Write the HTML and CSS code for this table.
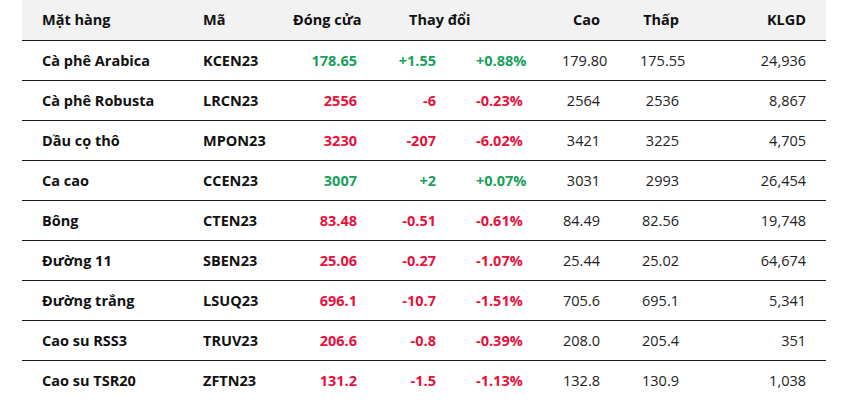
FILE: index.html
```html
<!DOCTYPE html>
<html lang="vi">
<head>
<meta charset="utf-8">
<title>Hàng hóa</title>
<link rel="stylesheet" href="styles.css">
</head>
<body>
<div class="wrap">
<table class="quotes">
  <colgroup>
    <col class="c1"><col class="c2"><col class="c3"><col class="c4"><col class="c5"><col class="c6"><col class="c7"><col class="c8">
  </colgroup>
  <thead>
    <tr>
      <th class="l">Mặt hàng</th>
      <th class="l">Mã</th>
      <th class="r">Đóng cửa</th>
      <th class="chg" colspan="2">Thay đổi</th>
      <th class="r">Cao</th>
      <th class="r">Thấp</th>
      <th class="r">KLGD</th>
    </tr>
  </thead>
  <tbody>
    <tr><td class="name">Cà phê Arabica</td><td class="code">KCEN23</td><td class="num b up">178.65</td><td class="num b up">+1.55</td><td class="num b up">+0.88%</td><td class="num">179.80</td><td class="num">175.55</td><td class="num">24,936</td></tr>
    <tr><td class="name">Cà phê Robusta</td><td class="code">LRCN23</td><td class="num b down">2556</td><td class="num b down">-6</td><td class="num b down">-0.23%</td><td class="num">2564</td><td class="num">2536</td><td class="num">8,867</td></tr>
    <tr><td class="name">Dầu cọ thô</td><td class="code">MPON23</td><td class="num b down">3230</td><td class="num b down">-207</td><td class="num b down">-6.02%</td><td class="num">3421</td><td class="num">3225</td><td class="num">4,705</td></tr>
    <tr><td class="name">Ca cao</td><td class="code">CCEN23</td><td class="num b up">3007</td><td class="num b up">+2</td><td class="num b up">+0.07%</td><td class="num">3031</td><td class="num">2993</td><td class="num">26,454</td></tr>
    <tr><td class="name">Bông</td><td class="code">CTEN23</td><td class="num b down">83.48</td><td class="num b down">-0.51</td><td class="num b down">-0.61%</td><td class="num">84.49</td><td class="num">82.56</td><td class="num">19,748</td></tr>
    <tr><td class="name">Đường 11</td><td class="code">SBEN23</td><td class="num b down">25.06</td><td class="num b down">-0.27</td><td class="num b down">-1.07%</td><td class="num">25.44</td><td class="num">25.02</td><td class="num">64,674</td></tr>
    <tr><td class="name">Đường trắng</td><td class="code">LSUQ23</td><td class="num b down">696.1</td><td class="num b down">-10.7</td><td class="num b down">-1.51%</td><td class="num">705.6</td><td class="num">695.1</td><td class="num">5,341</td></tr>
    <tr><td class="name">Cao su RSS3</td><td class="code">TRUV23</td><td class="num b down">206.6</td><td class="num b down">-0.8</td><td class="num b down">-0.39%</td><td class="num">208.0</td><td class="num">205.4</td><td class="num">351</td></tr>
    <tr><td class="name">Cao su TSR20</td><td class="code">ZFTN23</td><td class="num b down">131.2</td><td class="num b down">-1.5</td><td class="num b down">-1.13%</td><td class="num">132.8</td><td class="num">130.9</td><td class="num">1,038</td></tr>
  </tbody>
</table>
</div>
</body>
</html>
```
FILE: styles.css
```css
html, body {
  margin: 0;
  padding: 0;
  background: #ffffff;
}
body {
  font-family: "Open Sans", "Noto Sans", sans-serif;
  font-size: 14.5px;
  color: #111111;
}
.wrap {
  padding: 0 20px 0 22px;
}
.quotes {
  width: 804px;
  border-collapse: collapse;
  table-layout: fixed;
}
.c1 { width: 161px; }
.c2 { width: 90px; }
.c3 { width: 104px; }
.c4 { width: 79px; }
.c5 { width: 86px; }
.c6 { width: 78px; }
.c7 { width: 79px; }
.c8 { width: 127px; }

.quotes th {
  background: #f2f2f2;
  height: 40px;
  padding: 0 20px;
  font-weight: 700;
  color: #111111;
  border-bottom: 1px solid #1a1a1a;
  box-sizing: border-box;
  white-space: nowrap;
}
.quotes th.l { text-align: left; }
.quotes th.r { text-align: right; }
.quotes th.chg { text-align: left; padding-left: 32px; }

.quotes td {
  height: 40px;
  padding: 0 20px;
  border-bottom: 1px solid #1a1a1a;
  box-sizing: border-box;
  white-space: nowrap;
}
.quotes tbody tr:last-child td { border-bottom: none; }
.quotes td.name, .quotes td.code { font-weight: 700; text-align: left; }
.quotes td.num { text-align: right; color: #222222; }
.quotes td.b { font-weight: 700; }
.quotes td.up { color: #17a05d; }
.quotes td.down { color: #e8103c; }
```
